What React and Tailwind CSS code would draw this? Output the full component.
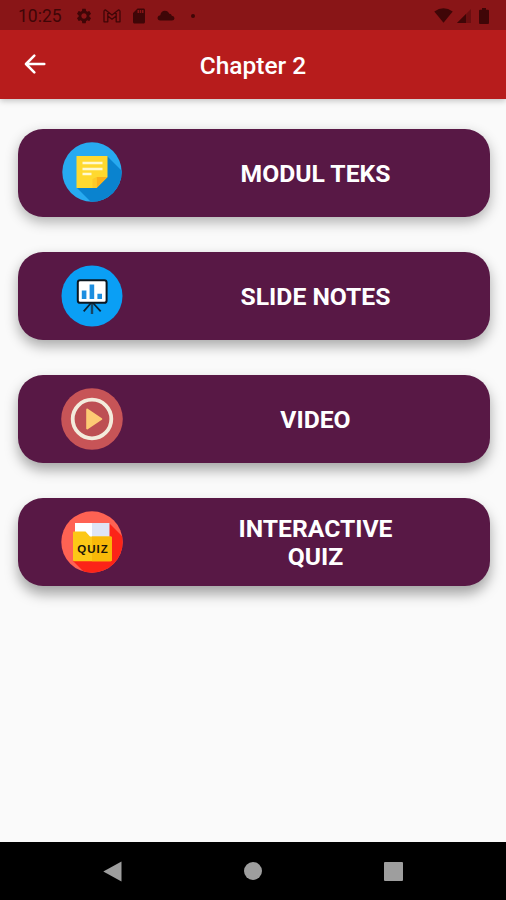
import { MdSettings, MdSdCard } from "react-icons/md";

function NotesIcon() {
  return (
    <svg width="62" height="62" viewBox="0 0 62 62">
      <defs>
        <clipPath id="notesClip">
          <circle cx="31" cy="30" r="29.7" />
        </clipPath>
      </defs>
      <circle cx="31" cy="30" r="29.7" fill="#27aaf0" />
      <path clipPath="url(#notesClip)" d="M46 14 62 30V62H32L15.5 45.5Z" fill="#0a83cf" />
      <path d="M15.5 14H46.5V35L35.5 46H15.5Z" fill="#ffd92f" />
      <path d="M35.5 46V35H46.5Z" fill="#fbb11c" />
      <path d="M31.5 37 35.5 35V46H31.5Z" fill="#fdca28" />
      <path d="M21.5 21H41.5M21.5 27H41.5M21.5 32H30.5" stroke="#fff9d2" strokeWidth="2.4" />
    </svg>
  );
}

function SlidesIcon() {
  return (
    <svg width="62" height="62" viewBox="0 0 62 62">
      <circle cx="31" cy="31" r="30.5" fill="#0a9ff5" />
      <path d="M30 38 22.7 46.3M32 38 39.7 46.3" stroke="#0b2233" strokeWidth="1.8" />
      <path d="M31 38V49" stroke="#184563" strokeWidth="2.4" />
      <rect x="16.8" y="15.2" width="28.8" height="22.6" rx="2.4" fill="#fff" stroke="#0b1720" strokeWidth="2" />
      <path d="M20.8 25.5H25.4V34H20.8ZM28.6 19.5H33.2V34H28.6ZM36.4 28.8H41V34H36.4Z" fill="#1c8ee0" />
    </svg>
  );
}

function VideoIcon() {
  return (
    <svg width="62" height="62" viewBox="0 0 62 62">
      <circle cx="31" cy="31" r="30.8" fill="#c75457" />
      <circle cx="31" cy="31" r="19.3" fill="#bd4f53" stroke="#f3ebdc" strokeWidth="3.8" />
      <path d="M26.2 21.5 40.3 31 26.2 40.5Z" fill="#fdcb74" stroke="#fdcb74" strokeWidth="2" strokeLinejoin="round" />
    </svg>
  );
}

function QuizIcon() {
  return (
    <svg width="62" height="62" viewBox="0 0 62 62">
      <defs>
        <clipPath id="quizClip">
          <circle cx="31" cy="31" r="30.7" />
        </clipPath>
      </defs>
      <circle cx="31" cy="31" r="30.7" fill="#ff6253" />
      <path clipPath="url(#quizClip)" d="M48 12 62 26V62H24L12 50Z" fill="#fc2418" />
      <path d="M14 12H31V30H14Z" fill="#fff" />
      <path d="M31 12H48.5V30H31Z" fill="#dfe5f5" />
      <path d="M12 21.5Q12 20.5 13 20.5H24.5L29 25.5H49.5Q50.8 25.5 50.8 26.5V49Q50.8 50.3 49.5 50.3H13.2Q12 50.3 12 49Z" fill="#fcc816" />
      <path d="M31 25.5H49.5Q50.8 25.5 50.8 26.5V49Q50.8 50.3 49.5 50.3H31Z" fill="#f9b908" />
      <text x="31.5" y="42" textAnchor="middle" textLength="30.5" lengthAdjust="spacing" fontFamily="Liberation Sans, sans-serif" fontWeight="700" fontSize="11.5" fill="#1b1508">
        QUIZ
      </text>
    </svg>
  );
}

// shadows get a bit heavier further down the screen
const items = [
  { label: "MODUL TEKS", Icon: NotesIcon, shadow: "shadow-[0_5px_13px_rgba(0,0,0,0.3)]" },
  { label: "SLIDE NOTES", Icon: SlidesIcon, shadow: "shadow-[0_6px_13px_rgba(0,0,0,0.33)]" },
  { label: "VIDEO", Icon: VideoIcon, shadow: "shadow-[0_7px_13px_rgba(0,0,0,0.34)]" },
  { label: "INTERACTIVE QUIZ", Icon: QuizIcon, shadow: "shadow-[0_8px_13px_rgba(0,0,0,0.35)]" },
];

function StatusBar() {
  return (
    <div className="flex h-[30px] items-center bg-[#891517] pt-[1px] pr-[17px] pl-[18px] text-[#3f0607]">
      <span className="w-[44px] pt-[2px] text-[17.5px] leading-none whitespace-nowrap">10:25</span>
      <MdSettings className="ml-[13px]" size={18} />
      {/* mail */}
      <svg className="ml-[10px]" width="18" height="14" viewBox="0 0 18 14" fill="none" stroke="currentColor" strokeWidth="1.3" strokeLinejoin="round">
        <path d="M1 2.6Q1 .9 2.6 1L9 6 15.4 1Q17 .9 17 2.6V12.8H13.2V7L9 10.2 4.8 7V12.8H1ZM4.8 2.8V7M13.2 2.8V7" />
      </svg>
      <MdSdCard className="ml-[9px]" size={18} />
      {/* cloud */}
      <svg className="ml-[9px]" width="18" height="11" viewBox="0 0 18 11" fill="currentColor">
        <path d="M3.2 10.5Q.5 10.3.5 7.8.7 5.5 3.3 5.2 4 .9 7.8.7 11 .6 12.2 3.7 14.4 3.5 14.8 5.8 17.4 6 17.5 8.2 17.3 10.4 15 10.5Z" />
      </svg>
      <span className="ml-[16px] size-1 rounded-full bg-current" />
      {/* wifi, signal, battery */}
      <svg className="ml-auto" width="19" height="15" viewBox="0 0 19 15" fill="currentColor">
        <path d="M.3 3.5Q9.5-3 18.7 3.5L9.5 14.7Z" />
      </svg>
      <svg className="ml-[4px]" width="14" height="14" viewBox="0 0 14 14" fill="currentColor">
        <path d="M14 0V14H0Z" opacity=".4" />
        <path d="M9 5V14H0Z" />
      </svg>
      <svg className="ml-[8px]" width="10" height="16" viewBox="0 0 10 16" fill="currentColor">
        <path d="M3 0H7V1.8H9Q10 1.8 10 2.8V15Q10 16 9 16H1Q0 16 0 15V2.8Q0 1.8 1 1.8H3Z" />
      </svg>
    </div>
  );
}

export default function App() {
  return (
    <div className="flex h-[900px] w-[506px] flex-col overflow-hidden bg-[#fafafa] font-['Roboto',sans-serif]">
      <header className="z-10 bg-[#b71c1c] shadow-[0_2px_6px_rgba(0,0,0,0.22)]">
        <StatusBar />
        <div className="grid h-[69px] grid-cols-[1fr_auto_1fr] items-center pb-px">
          <button className="ml-[24px] w-fit" aria-label="Back">
            <svg width="22" height="20" viewBox="0 0 22 20" fill="none" stroke="#fff" strokeWidth="2.5" strokeLinecap="round" strokeLinejoin="round">
              <path d="M20.3 10H2.2M10.3 1.6 2 10 10.3 18.4" />
            </svg>
          </button>
          <h1 className="pt-[4px] text-[24.5px] leading-none font-medium text-white">Chapter 2</h1>
        </div>
      </header>

      <main className="flex flex-1 flex-col gap-[35px] pt-[29.5px] pr-[16.5px] pl-[18px]">
        {items.map(({ label, Icon, shadow }) => (
          <button
            key={label}
            className={`flex h-[88px] shrink-0 items-center rounded-[25px] bg-[#581845] ${shadow}`}
          >
            <span className="ml-[43px] shrink-0">
              <Icon />
            </span>
            <span className="ml-[105px] w-[175px] pt-[2px] text-center text-[24.7px] leading-[28px] font-bold text-white">
              {label}
            </span>
          </button>
        ))}
      </main>

      {/* system navigation */}
      <nav className="flex h-[58px] items-center bg-black pl-[103px]">
        <svg width="19" height="21" viewBox="0 0 19 21" fill="#9e9e9e">
          <path d="M18.5.5V20.5L.3 10.5Z" />
        </svg>
        <span className="ml-[122px] size-[18px] rounded-full bg-[#9e9e9e]" />
        <span className="ml-[122px] size-[19px] rounded-[1px] bg-[#9e9e9e]" />
      </nav>
    </div>
  );
}
